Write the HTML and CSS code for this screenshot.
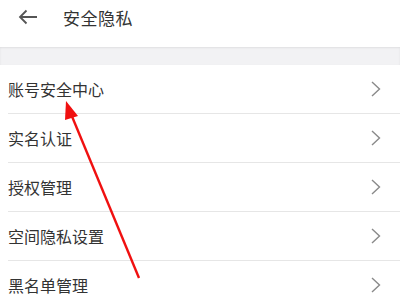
FILE: index.html
```html
<!DOCTYPE html>
<html lang="zh-CN">

<head>
    <meta charset="UTF-8" />
    <meta name="viewport" content="width=device-width, initial-scale=1.0" />
    <title>安全隐私</title>
    <link rel="stylesheet" href="styles.css">
</head>

<body>
    <header class="top-bar">
        <svg class="back" width="20" height="16" viewBox="0 0 20 16">
            <path d="M19 8H2M8.5 1.5L2 8l6.5 6.5" fill="none" stroke="#555" stroke-width="1.8" />
        </svg>
        <h1>安全隐私</h1>
    </header>
    <div class="gap"></div>

    <ul class="menu">
        <li class="menu-item"><span>账号安全中心</span><svg class="chev" width="10" height="16" viewBox="0 0 10 16"><path d="M1 1l7.5 7L1 15" /></svg></li>
        <li class="menu-item"><span>实名认证</span><svg class="chev" width="10" height="16" viewBox="0 0 10 16"><path d="M1 1l7.5 7L1 15" /></svg></li>
        <li class="menu-item"><span>授权管理</span><svg class="chev" width="10" height="16" viewBox="0 0 10 16"><path d="M1 1l7.5 7L1 15" /></svg></li>
        <li class="menu-item"><span>空间隐私设置</span><svg class="chev" width="10" height="16" viewBox="0 0 10 16"><path d="M1 1l7.5 7L1 15" /></svg></li>
        <li class="menu-item"><span>黑名单管理</span><svg class="chev" width="10" height="16" viewBox="0 0 10 16"><path d="M1 1l7.5 7L1 15" /></svg></li>
    </ul>

    <!-- red pointer drawn over the list -->
    <svg class="pointer" width="400" height="303" viewBox="0 0 400 303">
        <line x1="139" y1="278" x2="71" y2="114" stroke="#f01010" stroke-width="2.4" />
        <polygon points="66,101 78,116 65,120" fill="#f01010" />
    </svg>
</body>

</html>
```

FILE: styles.css
```css
body {
    margin: 0;
    padding: 0;
    font-family: "Noto Sans CJK SC", "Noto Sans", sans-serif;
    background: #fff;
    color: #333;
    overflow: hidden;
}

.top-bar {
    height: 47px;
    display: flex;
    align-items: center;
    padding-left: 18px;
    box-sizing: border-box;
    padding-bottom: 13px;
}

.top-bar .back {
    flex: none;
}

.top-bar h1 {
    margin: 0 0 0 25px;
    font-size: 17px;
    font-weight: normal;
    color: #333;
    letter-spacing: 0.5px;
}

.gap {
    height: 18px;
    background: #f2f2f4;
    box-shadow: inset 0 1px 2px rgba(0, 0, 0, 0.08);
}

.menu {
    list-style: none;
    margin: 0;
    padding: 0 0 0 8px;
}

.menu-item {
    height: 48px;
    display: flex;
    align-items: center;
    justify-content: space-between;
    border-bottom: 1px solid #e6e6e6;
    font-size: 16px;
    color: #333;
    padding-right: 19px;
}

.chev {
    fill: none;
    stroke: #8a8a8a;
    stroke-width: 1.4;
}

.pointer {
    position: absolute;
    top: 0;
    left: 0;
}
```
